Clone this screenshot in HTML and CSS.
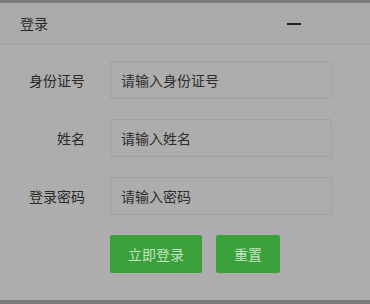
FILE: index.html
```html
<!DOCTYPE html>
<html lang="zh-CN">
<head>
    <meta charset="UTF-8">
    <meta name="viewport" content="width=device-width, initial-scale=1.0">
    <title>登录</title>
    <link rel="stylesheet" href="styles.css">
</head>
<body>
    <div class="layer">
        <div class="layer-title">
            <span>登录</span>
            <span class="min-btn"></span>
        </div>
        <form class="login-form">
            <div class="form-row">
                <label for="idcard">身份证号</label>
                <input type="text" id="idcard" placeholder="请输入身份证号">
            </div>
            <div class="form-row">
                <label for="name">姓名</label>
                <input type="text" id="name" placeholder="请输入姓名">
            </div>
            <div class="form-row">
                <label for="pwd">登录密码</label>
                <input type="password" id="pwd" placeholder="请输入密码">
            </div>
            <div class="form-btns">
                <button type="button" class="btn btn-submit">立即登录</button>
                <button type="reset" class="btn">重置</button>
            </div>
        </form>
    </div>
</body>
</html>
```

FILE: styles.css
```css
html,body{
    margin:0;
    padding:0;
    background:#7b7b7b;
    height:304px;
    overflow:hidden;
}
body{
    font-family:"Microsoft YaHei","Noto Sans CJK SC",sans-serif;
    font-size:14px;
    color:#2a2a2a;
}
.layer{
    margin-top:3px;
    height:297px;
    background:#adadad;
}
.layer-title{
    height:41px;
    line-height:41px;
    padding:0 20px;
    background:#aaaaaa;
    border-bottom:1px solid #a3a3a3;
    display:flex;
    justify-content:space-between;
    align-items:center;
}
.min-btn{
    width:14px;
    height:2px;
    background:#1e1e1e;
    margin-right:49px;
}
.login-form{
    padding-top:16px;
}
.form-row{
    display:flex;
    align-items:center;
    margin-bottom:20px;
}
.form-row label{
    width:85px;
    text-align:right;
    margin-right:25px;
}
.form-row input{
    width:222px;
    height:38px;
    box-sizing:border-box;
    border:1px solid #a2a2a2;
    border-radius:2px;
    background:#adadad;
    padding:0 10px;
    font:inherit;
    color:#2a2a2a;
    outline:none;
}
.form-row input::placeholder{
    color:#2e2e2e;
}
.form-btns{
    display:flex;
    gap:14px;
    padding-left:110px;
}
.btn{
    height:38px;
    width:64px;
    border:none;
    border-radius:2px;
    background:#3aa03a;
    color:#c4e2c4;
    font:inherit;
    padding:0;
}
.btn-submit{
    width:92px;
}
```
